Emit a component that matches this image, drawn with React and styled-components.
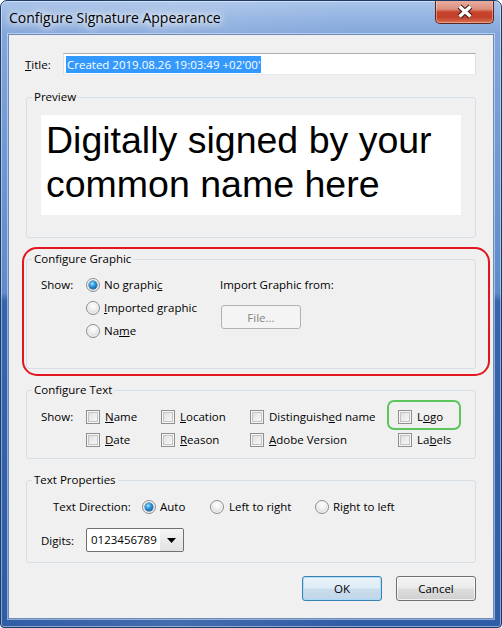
import React from "react";
import styled, { createGlobalStyle, css } from "styled-components";

const UI = `"Open Sans", "Noto Sans", "DejaVu Sans", sans-serif`;

const Global = createGlobalStyle`
  html, body { margin: 0; padding: 0; background: #ffffff; }
  body { font-family: ${UI}; }
  * { box-sizing: border-box; }
`;

const Window = styled.div`
  width: 502px;
  height: 628px;
  border: 1px solid #1e3a66;
  border-radius: 7px 7px 4px 4px;
  background:
    linear-gradient(90deg, rgba(255,255,255,0.0) 0%, rgba(255,255,255,0.10) 35%, rgba(255,255,255,0) 70%),
    linear-gradient(180deg, #a9c4e9 0px, #93b3e1 18px, #82a6da 34px, #6f98d2 160px, #5f8bca 292px, #3765ad 300px, #2f5ca6 628px);
  box-shadow: inset 0 0 0 1px rgba(255,255,255,0.45);
  display: flex;
  flex-direction: column;
  padding: 0 7px 8px 7px;
  overflow: hidden;
`;

const TitleBar = styled.div`
  height: 33px;
  display: flex;
  align-items: flex-start;
  justify-content: space-between;
`;

const TitleText = styled.div`
  margin-top: 7px;
  padding-left: 1px;
  font-family: ${UI};
  font-size: 14px;
  line-height: 20px;
  color: #000;
  text-shadow: 0 0 6px #fff, 0 0 10px rgba(255,255,255,0.9), 0 0 16px rgba(255,255,255,0.8);
`;

const CloseButton = styled.div`
  width: 59px;
  height: 24px;
  margin-top: -1px;
  border: 1px solid #5a2620;
  border-top: none;
  border-radius: 0 0 5px 5px;
  background: linear-gradient(180deg, #e9b0a4 0%, #dc8f7d 40%, #c8432c 52%, #c2402a 75%, #dc7352 100%);
  box-shadow: inset 0 0 0 1px rgba(255,220,210,0.45);
  display: flex;
  align-items: center;
  justify-content: center;
`;

const Client = styled.div`
  flex: 1;
  background: #f0f0f0;
  border: 1px solid #6d8bb7;
  box-shadow: 0 0 0 1px rgba(225,236,252,0.55);
  display: flex;
  flex-direction: column;
  padding: 18px 17px 0 17px;
  font-family: ${UI};
  font-size: 11.5px;
  color: #000;
`;

const TitleRow = styled.div`
  display: flex;
  align-items: center;
  height: 22px;
  margin-left: -1px;
`;

const FieldLabel = styled.span`
  width: ${p => (p.w ? `${p.w}px` : "auto")};
  flex: none;
  padding-left: ${p => p.pl || 0}px;
  line-height: 23px;
  white-space: nowrap;
`;

const U = styled.u`
  text-decoration: underline;
  text-underline-offset: 1px;
`;

const TextBox = styled.div`
  flex: 1;
  height: 22px;
  background: #fff;
  border: 1px solid #dbdfe6;
  border-top-color: #abadb3;
  border-bottom-color: #e3e9ef;
  display: flex;
  align-items: center;
  padding-left: 2px;
`;

const Selected = styled.span`
  background: #3399ff;
  color: #fff;
  line-height: 17px;
  padding: 0 1px;
`;

const GroupWrap = styled.div`
  position: relative;
  margin-top: ${p => p.mt}px;
`;

const Group = styled.fieldset`
  margin: 0;
  min-width: 0;
  border: 1px solid #d5dfe5;
  border-radius: 3px;
  padding: ${p => p.pad};
`;

const Legend = styled.legend`
  margin-left: -9px;
  padding: 0 2px;
  line-height: 16px;
  font-size: 11.5px;
`;

const PreviewBox = styled.div`
  height: 100px;
  background: #ffffff;
  padding: 3px 5px;
  font-family: "Liberation Sans", Arial, sans-serif;
  font-size: 37.5px;
  line-height: 44px;
  color: #000;
`;

const Highlight = styled.div`
  position: absolute;
  left: ${p => p.l}px;
  top: ${p => p.t}px;
  width: ${p => p.w}px;
  height: ${p => p.h}px;
  border: 2px solid ${p => p.color};
  border-radius: ${p => p.r}px;
  pointer-events: none;
`;

const Row = styled.div`
  display: flex;
  align-items: ${p => p.align || "center"};
  margin-top: ${p => p.mt || 0}px;
`;

const Column = styled.div`
  display: flex;
  flex-direction: column;
  width: ${p => (p.w ? `${p.w}px` : "auto")};
`;

const Option = styled.div`
  position: relative;
  display: flex;
  align-items: center;
  height: 23px;
  gap: ${p => p.gap}px;
  width: ${p => (p.w ? `${p.w}px` : "auto")};
  flex: none;
  white-space: nowrap;
`;

const RadioCircle = styled.span`
  width: 14px;
  height: 14px;
  flex: none;
  border-radius: 50%;
  border: 1px solid #8a8c8e;
  background: radial-gradient(circle at 50% 35%, #ffffff 0%, #f2f2f2 35%, #d6d6d6 80%, #c8c8c8 100%);
  box-shadow: inset 0 0 0 1px rgba(255,255,255,0.7);
  display: inline-flex;
  align-items: center;
  justify-content: center;
  ${p =>
    p.checked &&
    css`
      &::after {
        content: "";
        width: 8px;
        height: 8px;
        border-radius: 50%;
        background: radial-gradient(circle at 40% 35%, #b7ecff 0%, #3aa7e8 30%, #136bb0 70%, #0a3f73 100%);
        box-shadow: 0 0 0 0.5px #164a7a;
      }
    `}
`;

const CheckBox = styled.span`
  width: 14px;
  height: 14px;
  flex: none;
  border: 1px solid #8e8f8f;
  background: linear-gradient(135deg, #d8d9da 0%, #eeeeee 55%, #fbfbfb 100%);
  box-shadow: inset 0 0 0 1px #f6f6f6, inset 0 0 0 2px #c3c6c9;
`;

const FileButton = styled.div`
  width: 80px;
  height: 24px;
  margin-top: 9px;
  margin-left: 1px;
  border: 1px solid #adb2b5;
  border-radius: 3px;
  background: #f4f4f4;
  color: #838383;
  display: flex;
  align-items: center;
  justify-content: center;
`;

const TextGrid = styled.div`
  display: grid;
  grid-template-columns: 45px 75px 89px 148px auto;
  grid-auto-rows: 23px;
  align-items: center;
`;

const Select = styled.div`
  width: 98px;
  height: 24px;
  border: 1px solid #707070;
  border-radius: 2px;
  background: #fff;
  display: flex;
  overflow: hidden;
`;

const SelectValue = styled.div`
  flex: 1;
  padding-left: 4px;
  line-height: 22px;
`;

const SelectArrow = styled.div`
  width: 23px;
  background: linear-gradient(180deg, #f4f4f4 0%, #ebebeb 50%, #e2e2e2 100%);
  display: flex;
  align-items: center;
  justify-content: center;
`;

const ButtonRow = styled.div`
  display: flex;
  justify-content: flex-end;
  gap: 14px;
  margin-top: 13px;
`;

const Button = styled.div`
  width: 80px;
  height: 25px;
  border-radius: 3px;
  display: flex;
  align-items: center;
  justify-content: center;
  border: 1px solid ${p => (p.primary ? "#3c7fb1" : "#707070")};
  background: ${p =>
    p.primary
      ? "linear-gradient(180deg, #eaf3fa 0%, #dfecf6 48%, #cadded 52%, #c1d6ea 100%)"
      : "linear-gradient(180deg, #f2f2f2 0%, #ebebeb 48%, #dddddd 52%, #cfcfcf 100%)"};
  box-shadow: inset 0 0 0 1px ${p => (p.primary ? "rgba(160,220,250,0.8)" : "rgba(255,255,255,0.7)")};
`;

const CloseX = () => (
  <svg width="20" height="15" viewBox="0 0 20 15">
    <path d="M4.5 2.5 L15.5 12.5 M15.5 2.5 L4.5 12.5" stroke="#3b1610" strokeWidth="5.5" strokeLinecap="butt" />
    <path d="M4.5 2.5 L15.5 12.5 M15.5 2.5 L4.5 12.5" stroke="#ffffff" strokeWidth="3.4" strokeLinecap="butt" />
  </svg>
);

const Arrow = () => (
  <svg width="9" height="5" viewBox="0 0 9 5">
    <path d="M0 0 H9 L4.5 5 Z" fill="#000" />
  </svg>
);

const Radio = ({ checked, children, w, gap = 4 }) => (
  <Option w={w} gap={gap}>
    <RadioCircle checked={checked} />
    <span>{children}</span>
  </Option>
);

const Check = ({ children, w, gap = 5, highlight }) => (
  <Option w={w} gap={gap}>
    <CheckBox />
    <span>{children}</span>
    {highlight && <Highlight l={-11} t={-5} w={74} h={30} r={7} color="#5cc65c" />}
  </Option>
);

export default function App() {
  return (
    <>
      <Global />
      <Window>
        <TitleBar>
          <TitleText>Configure Signature Appearance</TitleText>
          <CloseButton>
            <CloseX />
          </CloseButton>
        </TitleBar>
        <Client>
          <TitleRow>
            <FieldLabel w={38}>
              <U>T</U>itle:
            </FieldLabel>
            <TextBox>
              <Selected>Created 2019.08.26 19:03:49 +02'00'</Selected>
            </TextBox>
          </TitleRow>

          <GroupWrap mt={14}>
            <Group pad="10px 14px 22px 14px">
              <Legend>Preview</Legend>
              <PreviewBox>
                Digitally signed by your
                <br />
                common name here
              </PreviewBox>
            </Group>
          </GroupWrap>

          <GroupWrap mt={13}>
            <Group pad="6px 14px 26px 14px">
              <Legend>Configure Graphic</Legend>
              <Row align="flex-start">
                <FieldLabel w={45}>Show:</FieldLabel>
                <Column w={134}>
                  <Radio checked>
                    No graphi<U>c</U>
                  </Radio>
                  <Radio>
                    <U>I</U>mported graphic
                  </Radio>
                  <Radio>
                    Na<U>m</U>e
                  </Radio>
                </Column>
                <Column>
                  <FieldLabel>Import Graphic from:</FieldLabel>
                  <FileButton>File...</FileButton>
                </Column>
              </Row>
            </Group>
            <Highlight l={-4} t={-4} w={468} h={129} r={15} color="#e3161f" />
          </GroupWrap>

          <GroupWrap mt={13}>
            <Group pad="7px 14px 7px 14px">
              <Legend>Configure Text</Legend>
              <TextGrid>
                <FieldLabel>Show:</FieldLabel>
                <Check>
                  <U>N</U>ame
                </Check>
                <Check>
                  <U>L</U>ocation
                </Check>
                <Check>
                  Distinguish<U>e</U>d name
                </Check>
                <Check highlight>
                  L<U>o</U>go
                </Check>
                <span />
                <Check>
                  <U>D</U>ate
                </Check>
                <Check>
                  <U>R</U>eason
                </Check>
                <Check>
                  <U>A</U>dobe Version
                </Check>
                <Check>
                  La<U>b</U>els
                </Check>
              </TextGrid>
            </Group>
          </GroupWrap>

          <GroupWrap mt={13}>
            <Group pad="7px 14px 10px 14px">
              <Legend>Text Properties</Legend>
              <Row>
                <FieldLabel w={101} pl={12}>
                  Text Direction:
                </FieldLabel>
                <Radio checked w={68}>
                  Auto
                </Radio>
                <Radio w={105} gap={5}>
                  Left to right
                </Radio>
                <Radio gap={4}>Right to left</Radio>
              </Row>
              <Row mt={10}>
                <FieldLabel w={45}>Digits:</FieldLabel>
                <Select>
                  <SelectValue>0123456789</SelectValue>
                  <SelectArrow>
                    <Arrow />
                  </SelectArrow>
                </Select>
              </Row>
            </Group>
          </GroupWrap>

          <ButtonRow>
            <Button primary>OK</Button>
            <Button>Cancel</Button>
          </ButtonRow>
        </Client>
      </Window>
    </>
  );
}
